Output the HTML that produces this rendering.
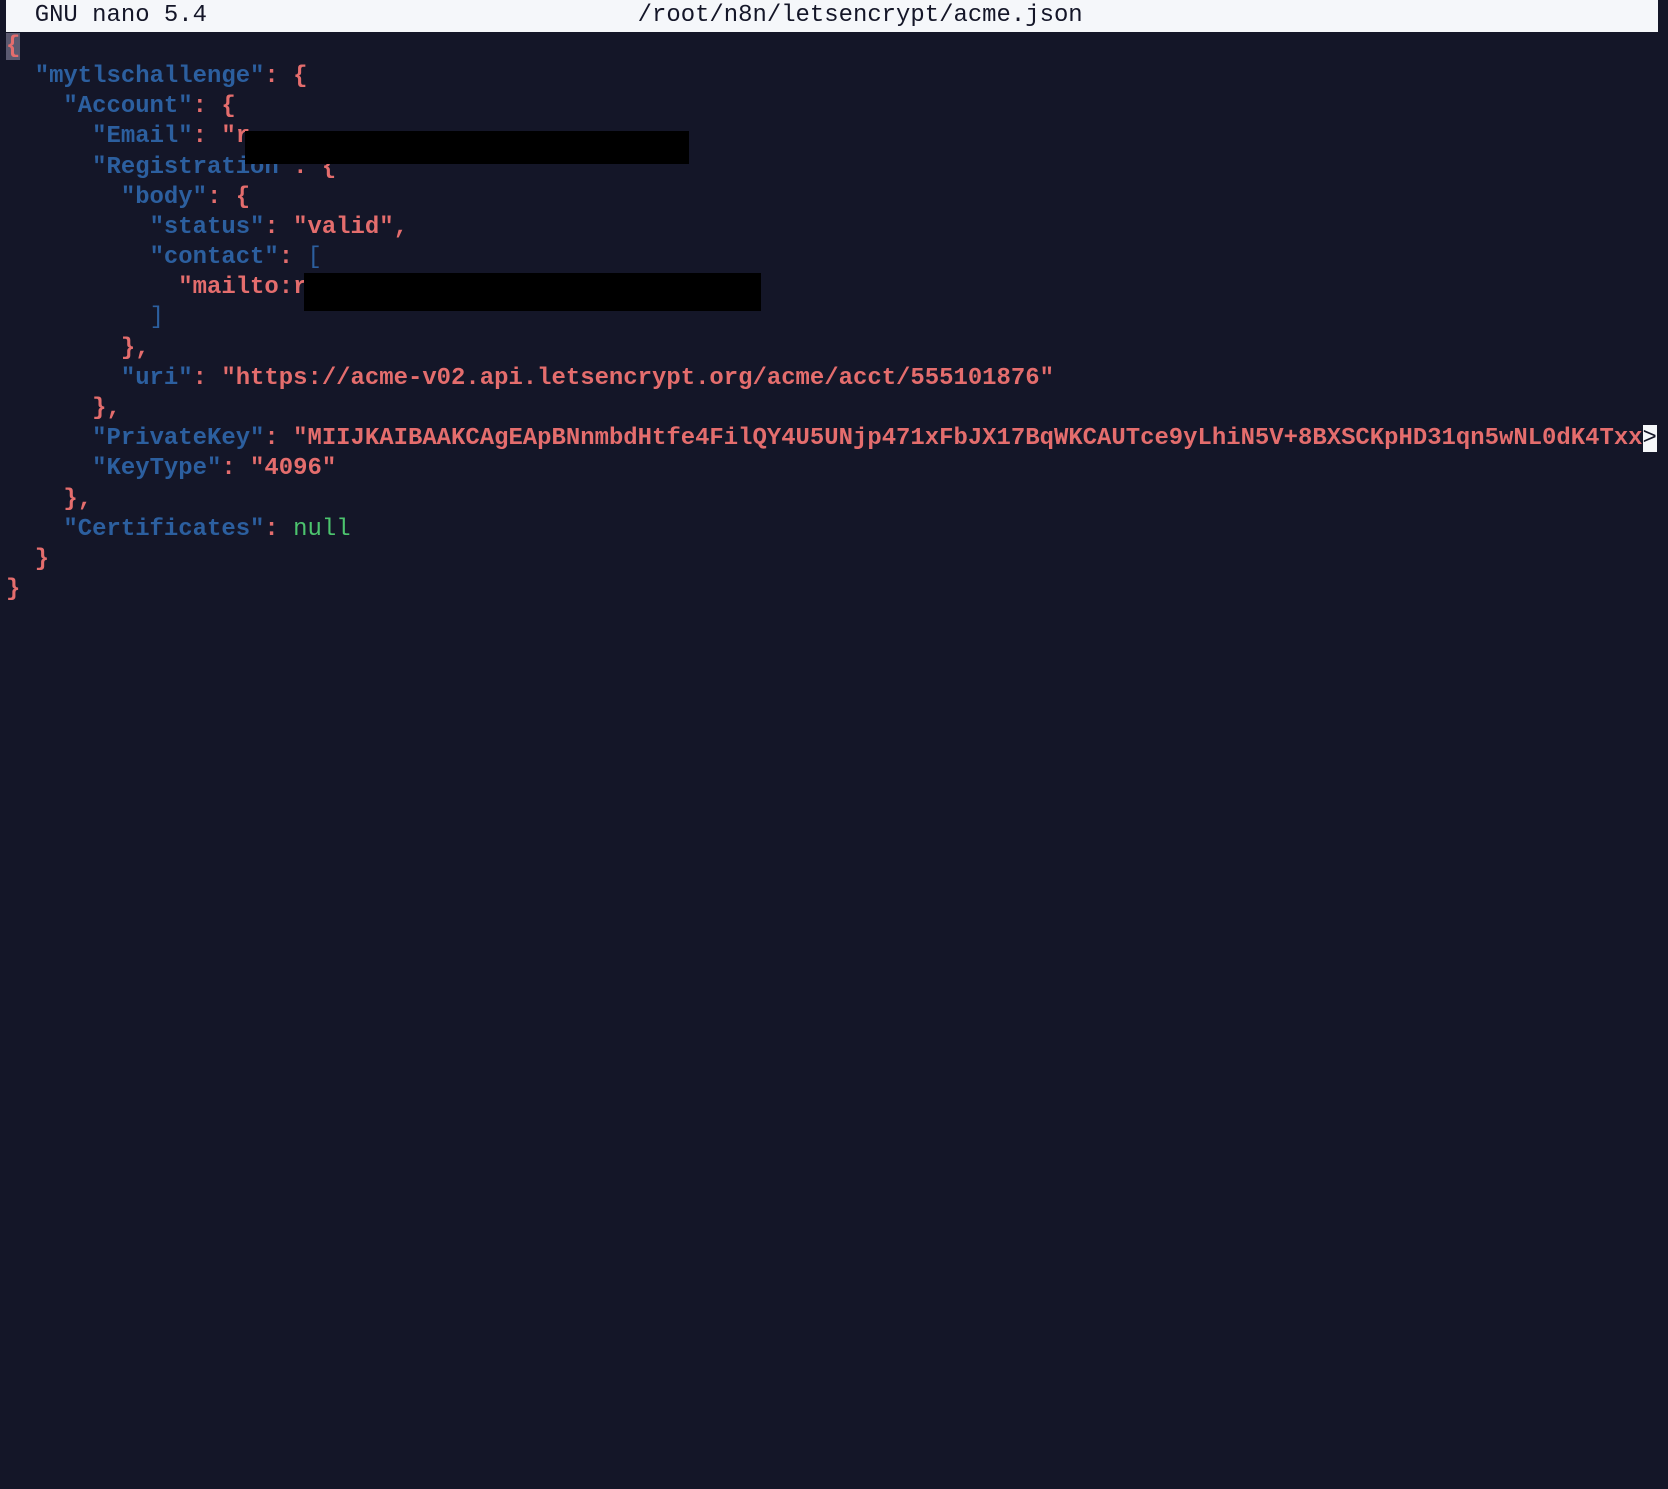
<!DOCTYPE html>
<html><head><meta charset="utf-8"><style>
html,body{margin:0;padding:0;background:#141628;width:1668px;height:1489px;overflow:hidden}
.t{position:absolute;left:6px;top:0;width:1652px;font-family:"Liberation Mono",monospace;font-size:23.93px}
.bar{height:31.8px;line-height:31.8px;background:#f5f7fa;color:#141628;white-space:pre}
.l{height:30.2px;line-height:30.2px;font-weight:bold;color:#e46d6d;white-space:pre}
.k{color:#2c5f9f}.n{color:#4cc46e;font-weight:normal}
.cur{background:#5b5a70;color:#e46d6d}
.gt{background:#f5f7fa;color:#141628;font-weight:normal}
.box{position:absolute;background:#000}
</style></head><body>
<div class="t"><div class="bar">  GNU nano 5.4                              /root/n8n/letsencrypt/acme.json</div><div class="l"><span class="cur">{</span></div><div class="l">  <span class="k">"mytlschallenge"</span>: {</div><div class="l">    <span class="k">"Account"</span>: {</div><div class="l">      <span class="k">"Email"</span>: "r</div><div class="l">      <span class="k">"Registration"</span>: {</div><div class="l">        <span class="k">"body"</span>: {</div><div class="l">          <span class="k">"status"</span>: "valid",</div><div class="l">          <span class="k">"contact"</span>: <span class="k" style="font-weight:normal">[</span></div><div class="l">            "mailto:r</div><div class="l">          <span class="k" style="font-weight:normal">]</span></div><div class="l">        },</div><div class="l">        <span class="k">"uri"</span>: "https://acme-v02.api.letsencrypt.org/acme/acct/555101876"</div><div class="l">      },</div><div class="l">      <span class="k">"PrivateKey"</span>: "MIIJKAIBAAKCAgEApBNnmbdHtfe4FilQY4U5UNjp471xFbJX17BqWKCAUTce9yLhiN5V+8BXSCKpHD31qn5wNL0dK4Txx<span class="gt">&gt;</span></div><div class="l">      <span class="k">"KeyType"</span>: "4096"</div><div class="l">    },</div><div class="l">    <span class="k">"Certificates"</span>: <span class="n">null</span></div><div class="l">  }</div><div class="l">}</div></div>
<div class="box" style="left:245px;top:131px;width:444px;height:33px"></div>
<div class="box" style="left:304px;top:273px;width:457px;height:38px"></div>
</body></html>
